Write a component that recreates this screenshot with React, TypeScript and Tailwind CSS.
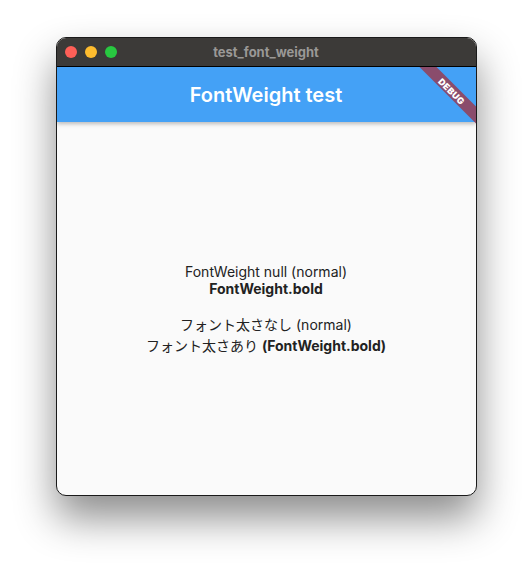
export default function App() {
  return (
    <div className="min-h-[569px] w-[532px] bg-white pt-[37px] flex justify-center font-['Inter','Noto_Sans_CJK_JP',sans-serif]">
      <div className="w-[421px] h-[459px] rounded-[10px] border border-[#1a1a1a] bg-[#fafafa] overflow-hidden flex flex-col shadow-[0_22px_40px_rgba(0,0,0,0.45)]">
        {/* title bar */}
        <div className="relative h-[29px] bg-[#3c3a38] border-b border-black flex items-center justify-center shrink-0">
          <div className="absolute left-[8px] top-[8px] flex gap-[8px]">
            <span className="w-[12px] h-[12px] rounded-full bg-[#fe5f57]" />
            <span className="w-[12px] h-[12px] rounded-full bg-[#febc2e]" />
            <span className="w-[12px] h-[12px] rounded-full bg-[#28c840]" />
          </div>
          <span className="text-[13px] font-bold text-[#9a9896] leading-none">test_font_weight</span>
        </div>

        {/* app */}
        <div className="relative flex-1 flex flex-col overflow-hidden">
          <div className="h-[55px] bg-[#44a1f6] flex items-center justify-center shadow-[0_2px_4px_rgba(0,0,0,0.25)] shrink-0">
            <span className="text-[20px] font-semibold text-white">FontWeight test</span>
          </div>
          <div className="flex-1 flex flex-col items-center justify-center text-[14px] leading-[17px] text-[#222]">
            <p>FontWeight null (normal)</p>
            <p className="font-bold">FontWeight.bold</p>
            <p className="h-[17px]" />
            <p className="mt-[2px]">フォント太さなし (normal)</p>
            <p className="mt-[4px]">
              フォント太さあり <span className="font-bold">(FontWeight.bold)</span>
            </p>
          </div>
          {/* debug banner */}
          <div className="absolute right-[-16px] top-[18px] w-[80px] h-[12px] rotate-45 bg-[#8a4c6c] flex items-center justify-center">
            <span className="text-[9px] font-black text-white leading-none tracking-[0.3px]">DEBUG</span>
          </div>
        </div>
      </div>
    </div>
  )
}
